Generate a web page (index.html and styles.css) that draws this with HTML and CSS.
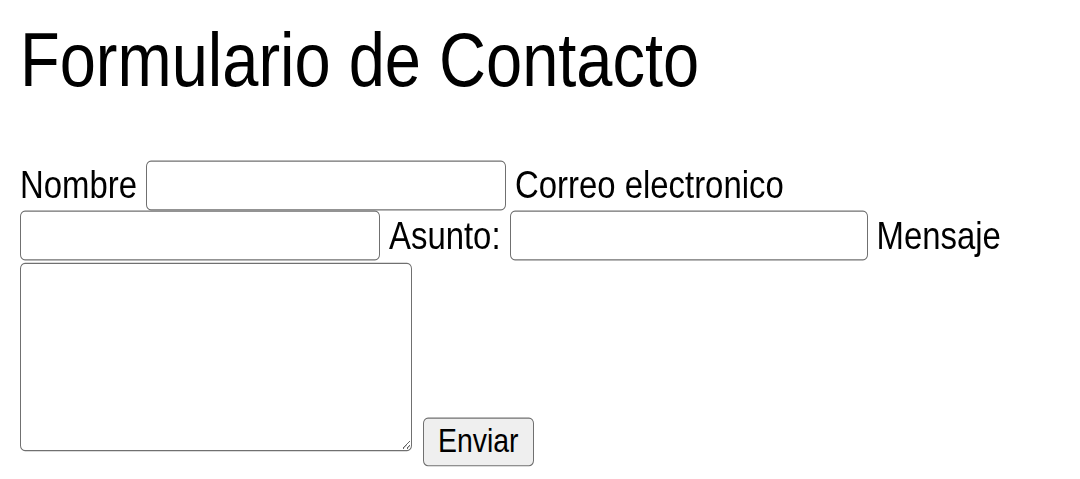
FILE: index.html
```html
<!DOCTYPE html>
<html lang="es">
<head>
  <meta charset="UTF-8">
  <meta name="viewport" content="width=device-width, initial-scale=1.0">
  <title>Formulario de Contacto</title>
  <link rel="stylesheet" href="styles.css">
</head>
<body>
  <div class="page">
    <h1>Formulario de Contacto</h1>

    <form class="contact" action="#" method="post">
      <div class="row">
        <label for="nombre">Nombre</label>
        <input type="text" id="nombre" name="nombre">
        <label for="correo">Correo electronico</label>
      </div>
      <div class="row">
        <input type="email" id="correo" name="correo">
        <label for="asunto">Asunto:</label>
        <input type="text" id="asunto" name="asunto" class="short">
        <label for="mensaje">Mensaje</label>
      </div>
      <div class="row row-last">
        <textarea id="mensaje" name="mensaje"></textarea>
        <button type="submit">Enviar</button>
      </div>
    </form>
  </div>
</body>
</html>
```

FILE: styles.css
```css
* { box-sizing: border-box; }
html, body { min-height: 100vh; }
body { margin: 0; overflow: hidden; background: #fff; color: #000; font-family: "Liberation Sans", Arial, sans-serif; font-size: 32.9px; }
/* the page is drawn a bit taller than wide */
.page { min-height: 411px; padding: 14.6px 0 0 20px; transform: scaleY(1.163); transform-origin: 0 0; }
h1 { margin: 0 0 48.2px; font-size: 65px; font-weight: normal; line-height: 1.15; }
.contact { display: flex; flex-direction: column; gap: 0.9px; }
.row { display: flex; align-items: center; gap: 9px; }
.row-last { align-items: flex-end; margin-top: 0.9px; gap: 10.5px; }
input { width: 360px; height: 43px; border: 1px solid #707070; border-radius: 5px; background: #fff; font: inherit; font-size: 27px; padding: 2px 6px; }
input.short { width: 358px; }
textarea { width: 392px; height: 161.7px; margin-bottom: 12.9px; border: 1px solid #707070; border-radius: 5px; background: #fff; font: inherit; font-size: 27px; }
button { width: 111.5px; height: 42.2px; border: 1px solid #707070; border-radius: 5px; background: #efefef; color: #000; font: inherit; font-size: 28.4px; padding: 0 10px; }
```
